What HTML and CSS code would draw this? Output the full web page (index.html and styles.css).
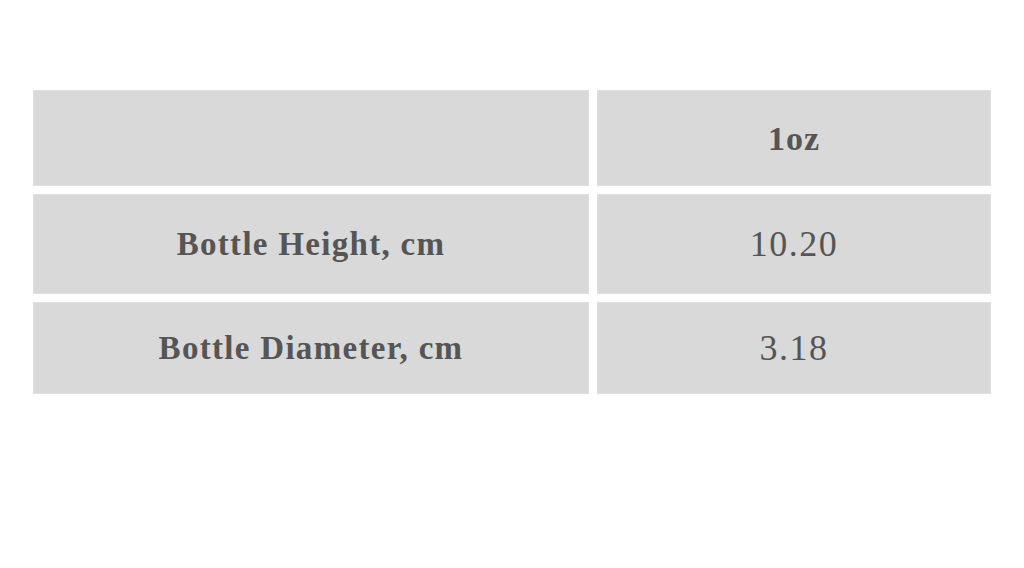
FILE: index.html
```html
<!DOCTYPE html>
<html>
<head>
<meta charset="utf-8">
<link rel="stylesheet" href="styles.css">
</head>
<body>
<div class="spec">
  <div class="cell head"></div>
  <div class="cell head val">1oz</div>
  <div class="cell label r2">Bottle Height, cm</div>
  <div class="cell num r2">10.20</div>
  <div class="cell label r3">Bottle Diameter, cm</div>
  <div class="cell num r3">3.18</div>
</div>
</body>
</html>
```
FILE: styles.css
```css
html, body {
  margin: 0;
  padding: 0;
  background: #ffffff;
}
body {
  width: 1024px;
  height: 568px;
  overflow: hidden;
}
.spec {
  display: grid;
  grid-template-columns: 556px 394px;
  grid-template-rows: 96px 100px 92px;
  gap: 8px;
  padding: 90px 0 0 33px;
}
.cell {
  background: #d9d9d9;
  box-shadow: inset 0 0 0 1px #dfdfdf;
  display: flex;
  align-items: center;
  justify-content: center;
  color: #555555;
  font-family: "Liberation Serif", "Times New Roman", serif;
}
.head.val {
  font-weight: bold;
  font-size: 34px;
  letter-spacing: 1px;
  padding-top: 1px;
}
.label {
  font-weight: bold;
  font-size: 33px;
  letter-spacing: 1.3px;
}
.num {
  font-size: 36px;
  letter-spacing: 1.5px;
}
```
